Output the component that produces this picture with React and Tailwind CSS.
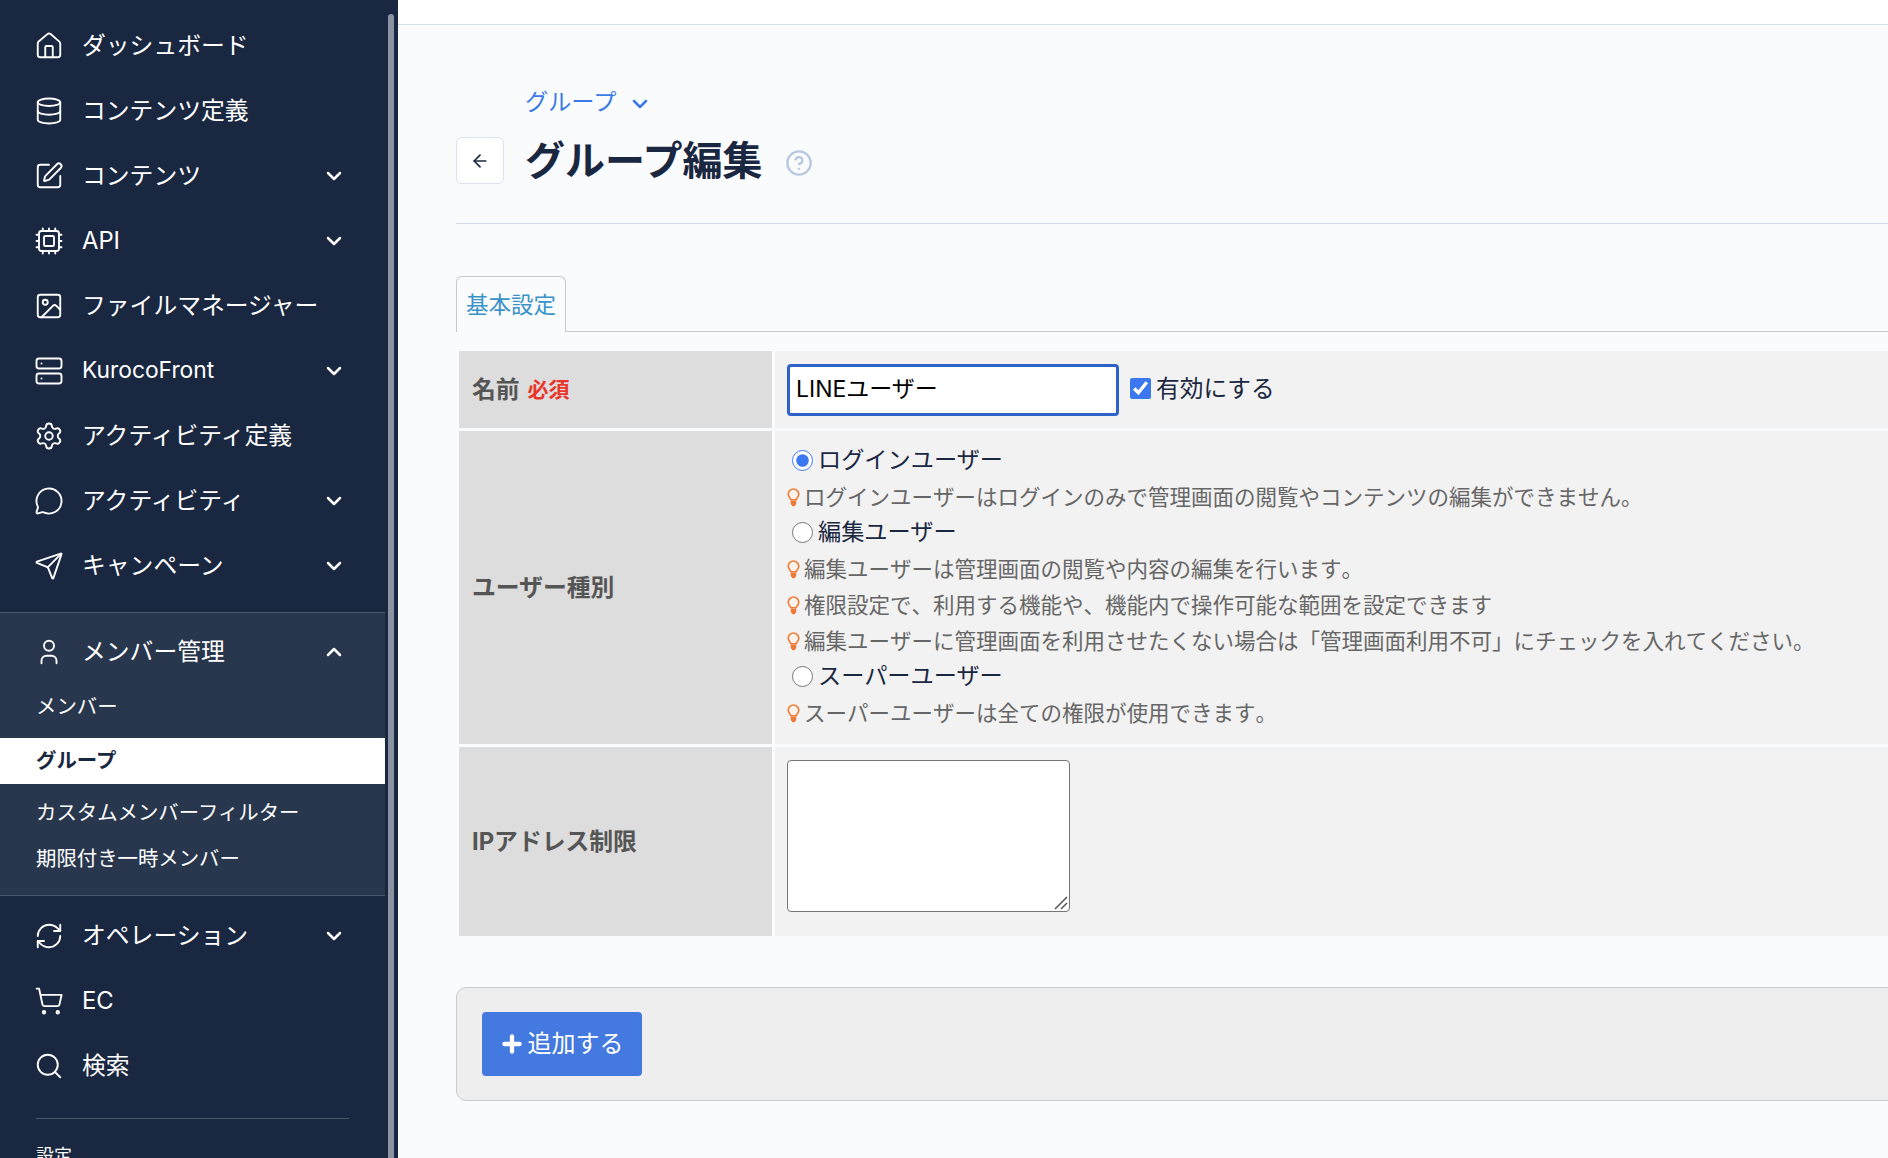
import {
  ArrowLeft,
  ChevronDown,
  ChevronUp,
  CircleHelp,
  Cpu,
  Database,
  House,
  Image,
  MessageCircle,
  Plus,
  RefreshCw,
  Search,
  Send,
  Server,
  Settings,
  ShoppingCart,
  SquarePen,
} from "lucide-react";
import { TbUser } from "react-icons/tb";

const topItems = [
  { label: "ダッシュボード", icon: House },
  { label: "コンテンツ定義", icon: Database },
  { label: "コンテンツ", icon: SquarePen, more: true },
  { label: "API", icon: Cpu, more: true },
  { label: "ファイルマネージャー", icon: Image },
  { label: "KurocoFront", icon: Server, more: true, latin: true },
  { label: "アクティビティ定義", icon: Settings },
  { label: "アクティビティ", icon: MessageCircle, more: true },
  { label: "キャンペーン", icon: Send, more: true },
];

const bottomItems = [
  { label: "オペレーション", icon: RefreshCw, more: true },
  { label: "EC", icon: ShoppingCart },
  { label: "検索", icon: Search },
];

function NavRow({ item }) {
  const Icon = item.icon;
  return (
    <div className="flex h-[65px] items-center pl-[34px] pr-[39px]">
      <Icon size={30} strokeWidth={1.5} className="shrink-0" />
      <span className={"ml-[18px] flex-1 whitespace-nowrap " + (item.latin ? "text-[22.8px]" : "")}>{item.label}</span>
      {item.more && <ChevronDown size={24} strokeWidth={2.5} />}
    </div>
  );
}

function Bulb() {
  return (
    <svg viewBox="0 0 12 18" className="mr-[4px] h-[19px] w-[13px] shrink-0" fill="none">
      <path
        d="M3.6 11.2C3.2 9.9 1 8.6 1 6a5 5 0 0 1 10 0c0 2.6-2.2 3.9-2.6 5.2z"
        stroke="#f07a35"
        strokeWidth="1.5"
        fill="#fdf3ec"
      />
      <path d="M3.4 12h5.2v3.2L7 17.4H5l-1.6-2.2z" fill="#f07a35" />
    </svg>
  );
}

function Note({ children }) {
  return (
    <p className="flex h-[36px] items-center pt-[3px] text-[21.5px] text-[#666666] [font-kerning:none] [text-spacing-trim:space-all]">
      <Bulb />
      {children}
    </p>
  );
}

function Radio({ label, checked }) {
  return (
    <label className="flex h-[36px] items-center pl-[5px] text-[23.2px] text-[#1a2740]">
      <input type="radio" name="kind" defaultChecked={checked} className="m-0 h-[21px] w-[21px] accent-[#3b78f0]" />
      <span className="ml-[5px]">{label}</span>
    </label>
  );
}

function Row({ label, children, className }) {
  return (
    <div className={"flex gap-[3px] " + className}>
      <div className="flex w-[313px] shrink-0 items-center bg-[#dddddd] pl-[13px] text-[23.8px] font-bold text-[#555555]">
        {label}
      </div>
      <div className="flex-1 bg-[#f2f2f2] pl-[12px]">{children}</div>
    </div>
  );
}

export default function App() {
  return (
    <div className="flex h-screen overflow-hidden bg-[#fafbfd] font-['Inter','Noto_Sans_CJK_JP',sans-serif]">
      {/* Sidebar */}
      <aside className="relative h-full w-[398px] shrink-0 overflow-hidden bg-[#1a2740] pt-[13px] text-[23.8px] text-white">
        <div className="absolute right-[4px] top-[14px] bottom-0 w-[6px] rounded-t-full bg-[#8a93a1]" />
        <div className="w-[385px]">
          {topItems.map((item) => (
            <NavRow key={item.label} item={item} />
          ))}

          <div className="mt-[14px] border-y border-[#4a586c] bg-[#28374d] pb-[13px]">
            <div className="flex h-[65px] items-center pl-[34px] pr-[39px] pt-[12px]">
              <TbUser size={30} strokeWidth={1.5} className="shrink-0" />
              <span className="ml-[18px] flex-1">メンバー管理</span>
              <ChevronUp size={24} strokeWidth={2.5} />
            </div>
            <div className="mt-[6px] text-[20.4px]">
              <div className="flex h-[46px] items-center pl-[36px]">メンバー</div>
              <div className="mt-[8px] flex h-[46px] items-center bg-white pl-[36px] font-bold text-[#1a2740]">グループ</div>
              <div className="mt-[6px] flex h-[46px] items-center pl-[36px]">カスタムメンバーフィルター</div>
              <div className="flex h-[46px] items-center pl-[36px]">期限付き一時メンバー</div>
            </div>
          </div>

          <div className="mt-[7px]">
            {bottomItems.map((item) => (
              <NavRow key={item.label} item={item} />
            ))}
          </div>

          <div className="mx-[36px] mt-[20px] border-t border-[#4a586c]" />
          <p className="mt-[23px] pl-[36px] text-[18px]">設定</p>
        </div>
      </aside>

      {/* Main */}
      <main className="min-w-0 flex-1">
        <div className="h-[25px] border-b border-[#d6e0ea] bg-white" />
        <div className="pl-[58px]">
          <div className="flex h-[199px] flex-col border-b border-[#d5dbe8]">
            <div className="mt-[60px] flex items-center pl-[69px] text-[23.2px] text-[#3b7be8]">
              グループ
              <ChevronDown size={24} strokeWidth={2.5} className="ml-[12px] mt-[4px]" />
            </div>
            <div className="mt-[11px] flex items-center">
              <button className="flex h-[47px] w-[48px] items-center justify-center rounded-[6px] border border-[#dbe2ee] bg-white text-[#1a2740]">
                <ArrowLeft size={20} strokeWidth={2} />
              </button>
              <h1 className="ml-[21px] text-[40px] font-bold text-[#1a2740]">グループ編集</h1>
              <CircleHelp size={28} strokeWidth={2} className="ml-[22px] mt-[4px] text-[#b8c8e0]" />
            </div>
          </div>

          <div className="mt-[52px] flex h-[56px] border-b border-[#c8c8c8]">
            <div className="-mb-px flex w-[110px] items-center justify-center rounded-t-[6px] border border-b-0 border-[#c8c8c8] bg-[#fafbfd] text-[22.5px] text-[#3a93c8]">
              基本設定
            </div>
          </div>

          <div className="mt-[19px] ml-[3px] flex flex-col gap-[3px]">
            <Row label={<>名前<span className="ml-[8px] text-[21px] text-[#e8352a]">必須</span></>} className="h-[77px]">
              <div className="flex h-full items-center">
                <input
                  defaultValue="LINEユーザー"
                  className="h-[52px] w-[332px] rounded-[4px] border-[3px] border-[#2f62c9] bg-white px-[6px] pb-[6px] text-[23px] text-black outline-none"
                />
                <input type="checkbox" defaultChecked className="ml-[11px] mb-[2px] h-[21px] w-[21px] accent-[#3b78f0]" />
                <span className="ml-[5px] pb-[2px] text-[23.7px] text-[#1a2740]">有効にする</span>
              </div>
            </Row>

            <Row label="ユーザー種別" className="h-[313px]">
              <div className="flex flex-col pt-[11px]">
                <Radio label="ログインユーザー" checked />
                <Note>ログインユーザーはログインのみで管理画面の閲覧やコンテンツの編集ができません。</Note>
                <Radio label="編集ユーザー" />
                <Note>編集ユーザーは管理画面の閲覧や内容の編集を行います。</Note>
                <Note>権限設定で、利用する機能や、機能内で操作可能な範囲を設定できます</Note>
                <Note>編集ユーザーに管理画面を利用させたくない場合は「管理画面利用不可」にチェックを入れてください。</Note>
                <Radio label="スーパーユーザー" />
                <Note>スーパーユーザーは全ての権限が使用できます。</Note>
              </div>
            </Row>

            <Row label="IPアドレス制限" className="h-[189px]">
              <div className="pt-[13px]">
                <div className="relative h-[152px] w-[283px]">
                  <textarea className="block h-full w-full resize-none rounded-[4px] border-[1.5px] border-[#767676] bg-white" />
                  <svg viewBox="0 0 14 14" className="absolute bottom-[2px] right-[2px] h-[14px] w-[14px]" stroke="#555555" strokeWidth="1.5">
                    <path d="M1 13 13 1M7 13 13 7" />
                  </svg>
                </div>
              </div>
            </Row>
          </div>

          <div className="mt-[51px] mr-[-20px] h-[114px] rounded-[10px] border border-[#cccccc] bg-[#eeeeee] py-[24px] pl-[25px]">
            <button className="flex h-[64px] w-[160px] items-center justify-center rounded-[4px] bg-[#4479e0] text-[24px] text-white">
              <Plus size={26} strokeWidth={4} className="mr-[3px] -ml-[2px]" />
              追加する
            </button>
          </div>
        </div>
      </main>
    </div>
  );
}
